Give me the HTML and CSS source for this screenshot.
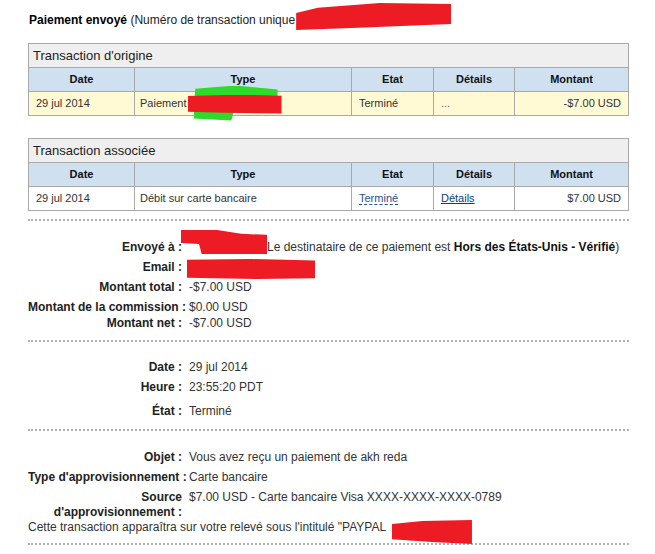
FILE: index.html
```html
<!DOCTYPE html>
<html lang="fr">
<head>
    <meta charset="UTF-8">
    <title>Détails de la transaction</title>
    <link rel="stylesheet" href="styles.css">
</head>
<body>
    <div class="page">
        <p class="title"><b>Paiement envoyé</b> (Numéro de transaction unique<span class="blot blot-title"></span></p>

        <table class="txn">
            <colgroup>
                <col class="c-date"><col class="c-type"><col class="c-state"><col class="c-details"><col class="c-amount">
            </colgroup>
            <tr class="caption-row"><td colspan="5">Transaction d'origine</td></tr>
            <tr class="head-row">
                <th>Date</th><th>Type</th><th>Etat</th><th>Détails</th><th>Montant</th>
            </tr>
            <tr class="data-row highlight">
                <td>29 jul 2014</td>
                <td class="type">Paiement <span class="blot-pay"></span></td>
                <td>Terminé</td>
                <td class="muted">...</td>
                <td class="amount">-$7.00 USD</td>
            </tr>
        </table>

        <table class="txn related">
            <colgroup>
                <col class="c-date"><col class="c-type"><col class="c-state"><col class="c-details"><col class="c-amount">
            </colgroup>
            <tr class="caption-row"><td colspan="5">Transaction associée</td></tr>
            <tr class="head-row">
                <th>Date</th><th>Type</th><th>Etat</th><th>Détails</th><th>Montant</th>
            </tr>
            <tr class="data-row">
                <td>29 jul 2014</td>
                <td class="type">Débit sur carte bancaire</td>
                <td><span class="help">Terminé</span></td>
                <td><a href="#" class="link">Détails</a></td>
                <td class="amount">$7.00 USD</td>
            </tr>
        </table>

        <div class="block first">
            <div class="row">
                <div class="label">Envoyé à :</div>
                <div class="value"><span class="blot blot-to"></span>Le destinataire de ce paiement est <b>Hors des États-Unis - Vérifié</b>)</div>
            </div>
            <div class="row">
                <div class="label">Email :</div>
                <div class="value"><span class="blot blot-mail"></span></div>
            </div>
            <div class="row">
                <div class="label">Montant total :</div>
                <div class="value">-$7.00 USD</div>
            </div>
            <div class="row">
                <div class="label">Montant de la commission :</div>
                <div class="value">$0.00 USD</div>
            </div>
            <div class="row tight">
                <div class="label">Montant net :</div>
                <div class="value">-$7.00 USD</div>
            </div>
        </div>

        <div class="block">
            <div class="row">
                <div class="label">Date :</div>
                <div class="value">29 jul 2014</div>
            </div>
            <div class="row">
                <div class="label">Heure :</div>
                <div class="value">23:55:20 PDT</div>
            </div>
            <div class="row loose">
                <div class="label">État :</div>
                <div class="value">Terminé</div>
            </div>
        </div>

        <div class="block last">
            <div class="row">
                <div class="label">Objet :</div>
                <div class="value">Vous avez reçu un paiement de akh reda</div>
            </div>
            <div class="row">
                <div class="label">Type d'approvisionnement :</div>
                <div class="value">Carte bancaire</div>
            </div>
            <div class="row">
                <div class="label wrap">Source<br>d'approvisionnement :</div>
                <div class="value">$7.00 USD - Carte bancaire Visa XXXX-XXXX-XXXX-0789</div>
            </div>
            <p class="note">Cette transaction apparaîtra sur votre relevé sous l'intitulé "PAYPAL <span class="blot blot-paypal"></span></p>
        </div>
    </div>
</body>
</html>
```

FILE: styles.css
```css
body {
    margin: 0;
    padding: 13px 0 0;
    background: #fff;
    font-family: "Liberation Sans", Arial, sans-serif;
    font-size: 12px;
    line-height: 15px;
    color: #333;
}
.page {
    width: 600px;
    margin-left: 28px;
}
.title {
    margin: 0 0 15px 1px;
    color: #222;
}
.title b {
    color: #000;
}

/* transaction tables */
.txn {
    width: 600px;
    border-collapse: collapse;
    table-layout: fixed;
    font-size: 11px;
    line-height: 13px;
}
.txn.related {
    margin-top: 22px;
}
.c-date { width: 106px; }
.c-type { width: 217px; }
.c-state { width: 82px; }
.c-details { width: 81px; }
.c-amount { width: 114px; }
.txn td,
.txn th {
    border: 1px solid #a9a9a9;
    padding: 0 7px;
    text-align: left;
    white-space: nowrap;
}
.txn td.type {
    padding-left: 5px;
}
.caption-row td {
    height: 23px;
    padding: 0 4px;
    background: #efefef;
    font-size: 13px;
    color: #222;
}
.head-row th {
    height: 23px;
    background: #cfe0f1;
    text-align: center;
    font-weight: bold;
    color: #111;
}
.data-row td {
    height: 23px;
    background: #fff;
}
.data-row.highlight td {
    background: #fff9d4;
}
.txn td.amount {
    text-align: right;
}
.muted {
    color: #666;
}
.help {
    color: #1f4f8f;
    border-bottom: 1px dashed #1f4f8f;
}
.link {
    color: #0b3d82;
}

/* detail blocks */
.block {
    width: 601px;
    border-top: 2px dotted #b0b0b0;
    padding: 19px 0 9px;
}
.block.first {
    margin-top: 8px;
}
.block + .block {
    padding-top: 18px;
    padding-bottom: 10px;
}
.block.last {
    padding: 19px 0 8px;
    border-bottom: 2px dotted #b0b0b0;
}
.row {
    display: flex;
    gap: 7px;
}
.row + .row {
    margin-top: 5px;
}
.row.tight {
    margin-top: 1px;
}
.row.loose {
    margin-top: 9px;
}
.label {
    flex: none;
    width: 154px;
    text-align: right;
    font-weight: bold;
    color: #222;
    white-space: nowrap;
}
.value {
    flex: 1;
    white-space: nowrap;
}
.value b {
    color: #111;
}
.note {
    margin: 0;
    white-space: nowrap;
}

/* red marker redactions */
.blot {
    display: inline-block;
    vertical-align: top;
    background: #ed1c24;
}
.blot-title {
    width: 155px;
    height: 27px;
    margin: -10px 0 -5px 1px;
    clip-path: polygon(0 37%, 14% 18%, 54% 0, 100% 4%, 100% 78%, 40% 92%, 0 100%);
}
.blot-to {
    width: 86px;
    height: 24px;
    margin: -10px 0 -9px -8px;
    clip-path: polygon(0 0, 42% 0, 70% 16%, 100% 20%, 100% 100%, 24% 100%, 21% 58%, 0 54%);
}
.blot-mail {
    width: 128px;
    height: 20px;
    margin: -1px 0 -6px -2px;
    clip-path: polygon(0 4%, 50% 0, 100% 8%, 100% 96%, 55% 100%, 0 94%);
}
.blot-paypal {
    width: 80px;
    height: 24px;
    margin: 0 0 -9px 3px;
    clip-path: polygon(0 17%, 38% 4%, 100% 0, 100% 100%, 50% 92%, 0 80%);
}
.blot-pay {
    display: inline-block;
    position: relative;
    width: 94px;
    height: 19px;
    margin: -4px 0 -4px -2px;
    vertical-align: middle;
}
.blot-pay::before,
.blot-pay::after {
    content: "";
    position: absolute;
}
.blot-pay::before {
    left: 6px;
    top: -9px;
    width: 84px;
    height: 35px;
    background: #2ddb2a;
    clip-path: polygon(2% 9%, 50% 0, 100% 11%, 100% 40%, 48% 74%, 45% 100%, 0 94%);
}
.blot-pay::after {
    inset: 0;
    background: #ed1c24;
    clip-path: polygon(0 8%, 60% 0, 100% 6%, 100% 100%, 40% 96%, 0 90%);
}
```
